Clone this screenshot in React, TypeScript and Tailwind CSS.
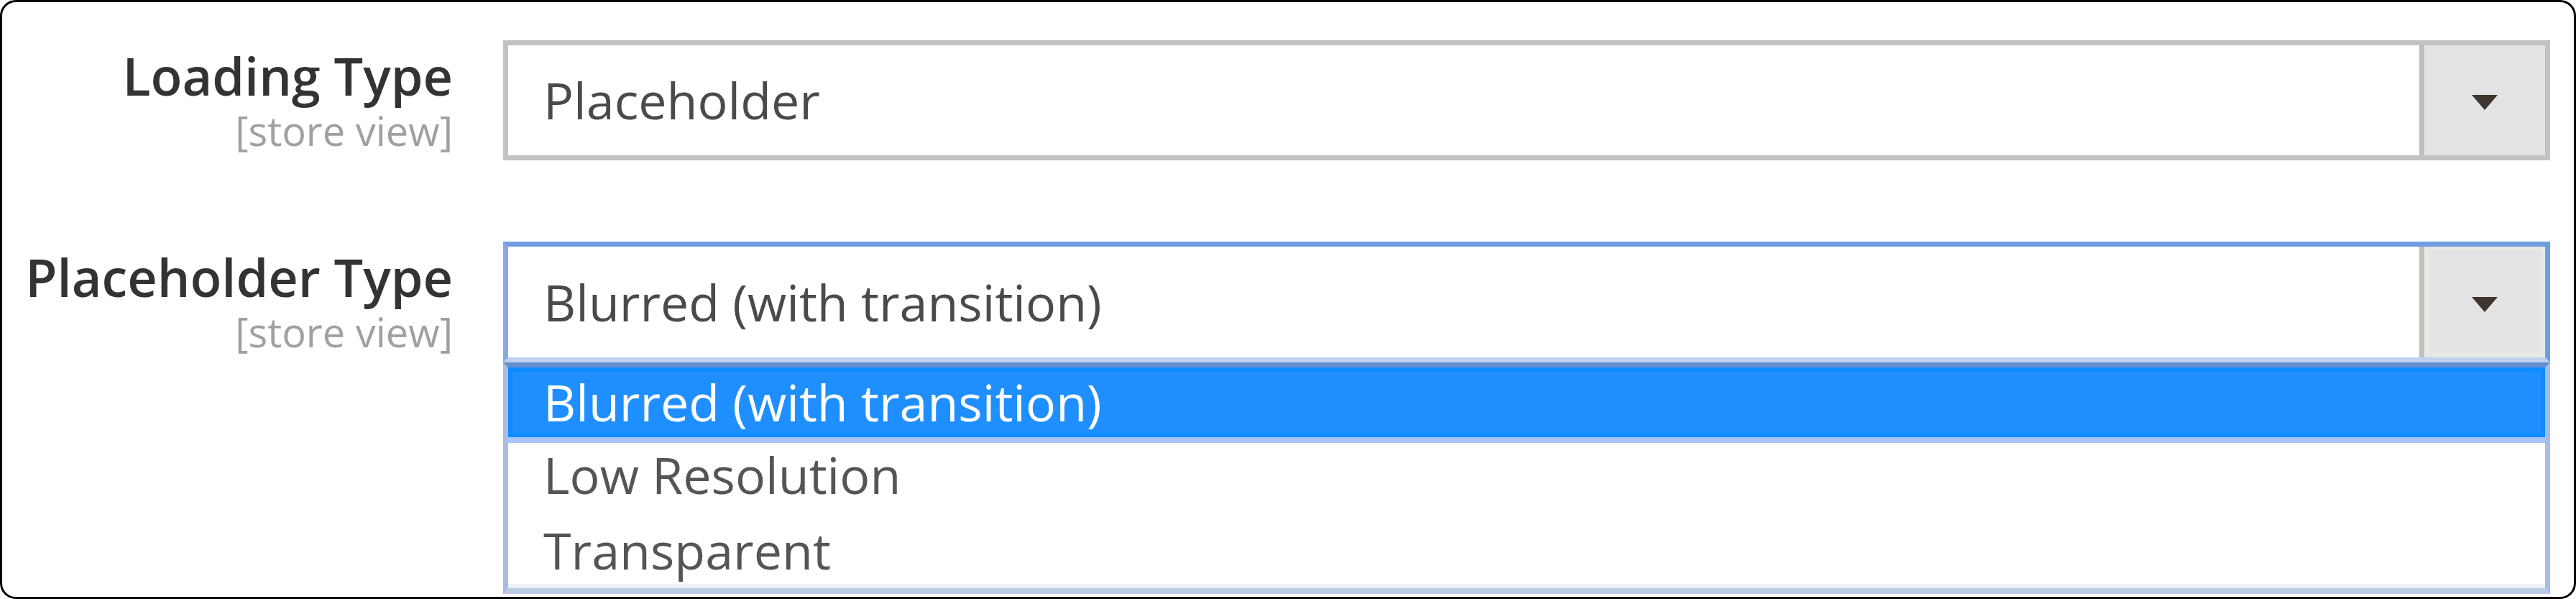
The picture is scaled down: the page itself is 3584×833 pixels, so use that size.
import React from "react";

function Arrow() {
  return (
    <svg width="36" height="21" viewBox="0 0 36 21" className="mt-[6px]">
      <polygon points="0,0 36,0 18,21" fill="#3f342e" />
    </svg>
  );
}

function Label({ title }: { title: string }) {
  return (
    <div className="w-[627px] shrink-0 text-right whitespace-nowrap">
      <div className="text-[72px] leading-[98px] font-semibold text-[#333333]">{title}</div>
      <div className="text-[56px] leading-[54px] text-[#a0a0a0]">[store view]</div>
    </div>
  );
}

export default function App() {
  return (
    <div className="w-[3584px] h-[833px] bg-white font-['Open_Sans',sans-serif]">
      <div className="h-[833px] border-[3px] border-black rounded-[22px] bg-white flex flex-col pt-[53px] overflow-hidden">
        {/* Row 1 */}
        <div className="flex">
          <Label title="Loading Type" />
          <div className="ml-[70px] w-[2848px] h-[167px] flex border-[7px] border-[#c2c2c2] bg-white">
            <div className="flex-1 pl-[49px] text-[70px] leading-[153px] text-[#4a4a4a] whitespace-nowrap">
              Placeholder
            </div>
            <div className="w-[175px] border-l-[7px] border-[#bebebe] bg-[#e3e3e3] flex items-center justify-center">
              <Arrow />
            </div>
          </div>
        </div>

        {/* Row 2 */}
        <div className="flex mt-[113px]">
          <Label title="Placeholder Type" />
          <div className="ml-[70px] w-[2848px] flex flex-col">
            <div className="h-[168px] flex border-[7px] border-[#6f9de0] border-l-[#88a8e6] border-b-[#c0d0f0] bg-white">
              <div className="flex-1 pl-[49px] text-[70px] leading-[154px] text-[#4a4a4a] whitespace-nowrap">
                Blurred (with transition)
              </div>
              <div className="w-[175px] border-l-[7px] border-[#c0c0c0] bg-[#e3e3e3] shadow-[inset_0_0_0_6px_#e8e8e4] flex items-center justify-center">
                <Arrow />
              </div>
            </div>
            <div className="flex flex-col border-x-[7px] border-x-[#a9bde2] border-t-[7px] border-t-[#6490d0] border-b-[8px] border-b-[#bccbe8] bg-white text-[70px] whitespace-nowrap">
              <div className="h-[105px] border-b-[8px] border-[#a8c4fc] bg-[#1f8fff] shadow-[inset_0_0_0_6px_#0d8bff] pl-[49px] leading-[97px] text-white">
                Blurred (with transition)
              </div>
              <div className="h-[104px] pl-[49px] leading-[88px] text-[#555555]">Low Resolution</div>
              <div className="h-[98px] border-b-[6px] border-[#eef0f8] pl-[49px] leading-[90px] text-[#555555]">
                Transparent
              </div>
            </div>
          </div>
        </div>
      </div>
    </div>
  );
}
